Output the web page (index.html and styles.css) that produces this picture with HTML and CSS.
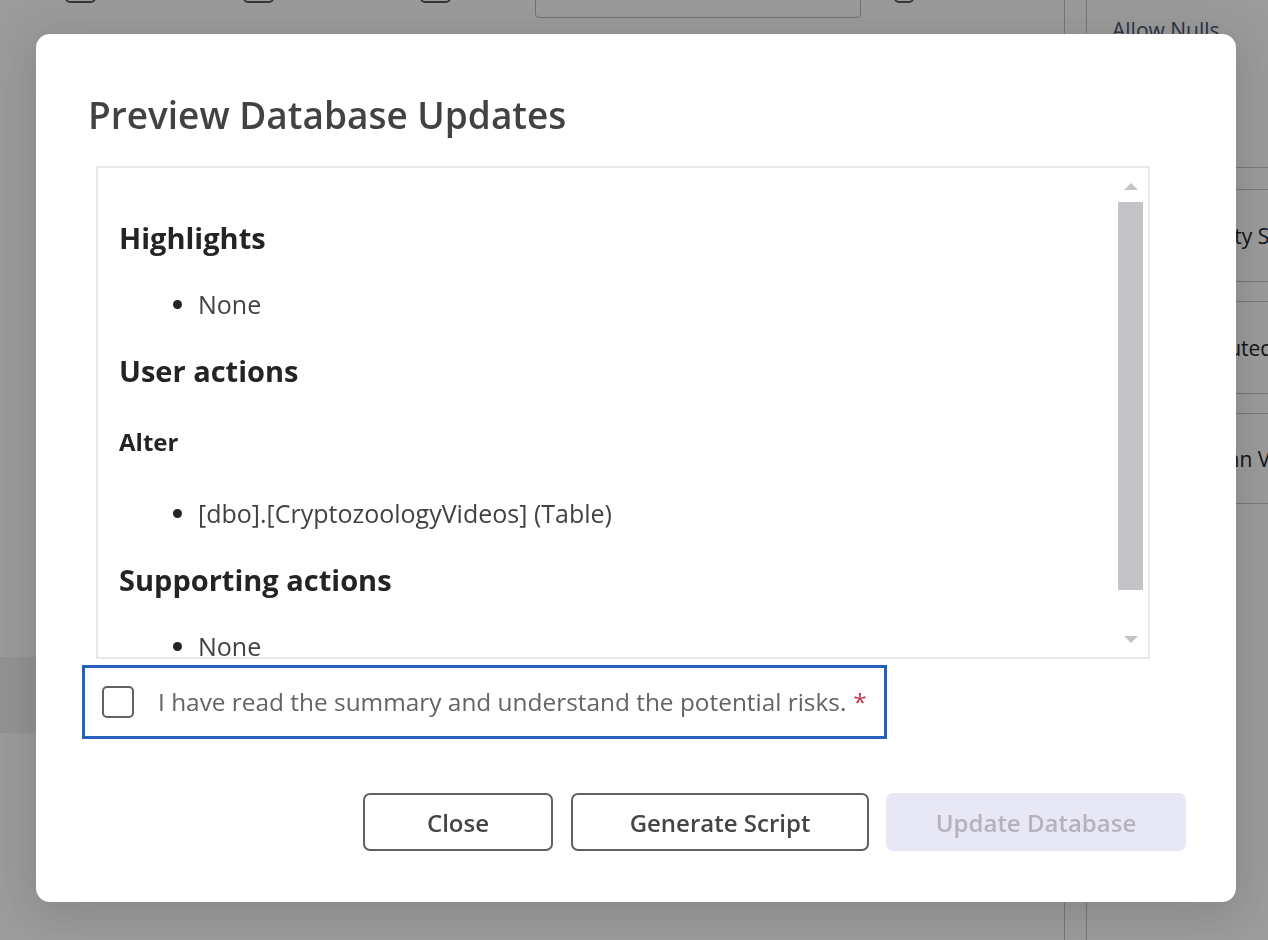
FILE: index.html
```html
<!DOCTYPE html>
<html lang="en">
<head>
<meta charset="utf-8">
<title>Preview Database Updates</title>
<link rel="stylesheet" href="styles.css">
</head>
<body>
<div class="app">
  <div class="toolbar">
    <span class="tb-check tb-c1"></span>
    <span class="tb-check tb-c2"></span>
    <span class="tb-check tb-c3"></span>
    <span class="tb-input"></span>
    <span class="tb-check tb-c4"></span>
  </div>
  <div class="workspace">
    <div class="main">
      <div class="main-row"></div>
    </div>
    <div class="side">
      <div class="side-col">
        <div class="side-head">Allow Nulls</div>
        <div class="prop">Identity Specification</div>
        <div class="prop prop-b">Computed</div>
        <div class="prop prop-c">Column Value</div>
      </div>
    </div>
  </div>
</div>

<div class="backdrop">
  <div class="dialog" role="dialog" aria-labelledby="dlg-title">
    <h1 class="dialog-title" id="dlg-title">Preview Database Updates</h1>
    <div class="summary">
      <div class="summary-content">
        <h2>Highlights</h2>
        <ul><li>None</li></ul>
        <h2>User actions</h2>
        <h3>Alter</h3>
        <ul><li>[dbo].[CryptozoologyVideos] (Table)</li></ul>
        <h2>Supporting actions</h2>
        <ul><li>None</li></ul>
      </div>
      <div class="scrollbar">
        <span class="sb-arrow sb-up"></span>
        <span class="sb-thumb"></span>
        <span class="sb-arrow sb-down"></span>
      </div>
    </div>
    <label class="ack">
      <span class="ack-box"></span>
      <span class="ack-text">I have read the summary and understand the potential risks.<span class="req">*</span></span>
    </label>
    <div class="actions">
      <button class="btn btn-close" type="button">Close</button>
      <button class="btn btn-script" type="button">Generate Script</button>
      <button class="btn btn-primary" type="button" disabled>Update Database</button>
    </div>
  </div>
</div>
</body>
</html>
```

FILE: styles.css
```css
* { box-sizing: border-box; }

html, body {
  margin: 0;
  height: 100%;
  overflow: hidden;
}

body {
  font-family: "Open Sans", "Noto Sans", Arial, sans-serif;
  background: #ffffff;
  color: #242424;
}

/* ---------- background application (dimmed by the backdrop) ---------- */
.app {
  height: 100%;
  display: flex;
  flex-direction: column;
}

.toolbar {
  height: 18px;
  flex: none;
  display: flex;
  align-items: flex-end;
  overflow: hidden;
}

.tb-check {
  flex: none;
  width: 31px;
  height: 30px;
  border: 2px solid #5a5a5a;
  border-radius: 5px;
  margin-bottom: 15px;
}
.tb-c1 { margin-left: 65px; }
.tb-c2 { margin-left: 147px; }
.tb-c3 { margin-left: 146px; }
.tb-c4 { width: 20px; margin-left: 33px; }

.tb-input {
  flex: none;
  width: 326px;
  height: 40px;
  margin-left: 84px;
  border: 1px solid #bdbdbd;
  border-radius: 4px;
}

.workspace {
  flex: 1;
  display: flex;
}

.main {
  flex: 1;
  padding-top: 639px;
}

.main-row {
  height: 76px;
  background: #f1f1f1;
}

.side {
  width: 204px;
  flex: none;
  border-left: 1px solid #c6c6c6;
  margin-top: -18px;
  padding-left: 21px;
}

.side-col {
  height: 100%;
  border-left: 1px solid #c6c6c6;
}

.side-head {
  height: 168px;
  border-bottom: 1px solid #c6c6c6;
  padding: 16px 0 0 25px;
  font-size: 21px;
  line-height: 28px;
  color: #4b5675;
  white-space: nowrap;
}

.prop {
  height: 93px;
  margin-top: 21px;
  border-top: 1px solid #c6c6c6;
  border-bottom: 1px solid #c6c6c6;
  display: flex;
  align-items: center;
  padding-left: 91px;
  font-size: 21px;
  color: #242424;
  white-space: nowrap;
  overflow: hidden;
}
.prop-b { margin-top: 19px; padding-left: 83px; }
.prop-c { margin-top: 19px; height: 91px; padding-left: 89px; }

/* ---------- modal ---------- */
.backdrop {
  position: fixed;
  inset: 0;
  background: rgba(0, 0, 0, 0.39);
  padding: 34px 32px 38px 36px;
  display: flex;
}

.dialog {
  flex: 1;
  background: #ffffff;
  border-radius: 14px;
  box-shadow: 0 0 50px 18px rgba(0, 0, 0, 0.07), 0 16px 48px rgba(0, 0, 0, 0.08);
  display: flex;
  flex-direction: column;
  padding: 0 50px 0 52px;
}

.dialog-title {
  margin: 61px 0 31px;
  font-size: 37px;
  line-height: 40px;
  font-weight: 600;
  color: #424242;
  letter-spacing: 0;
}

.summary {
  flex: none;
  width: 1054px;
  height: 493px;
  margin-left: 8px;
  border: 2px solid #e8e8e8;
  display: flex;
}

.summary-content {
  flex: 1;
  overflow: hidden;
  padding: 18px 0 0 21px;
}

.summary-content h2 {
  margin: 36px 0 35px;
  font-size: 29px;
  line-height: 32px;
  font-weight: 700;
  color: #242424;
}

.summary-content h3 {
  margin: 41px 0 42px;
  font-size: 24px;
  line-height: 28px;
  font-weight: 700;
  color: #242424;
}

.summary-content ul {
  margin: 0;
  padding-left: 79px;
}

.summary-content li {
  font-size: 25px;
  line-height: 30px;
  color: #424242;
}
.summary-content li::marker { color: #242424; }

.scrollbar {
  flex: none;
  width: 32px;
  display: flex;
  flex-direction: column;
  align-items: center;
  padding: 15px 5px 14px 2px;
}

.sb-arrow {
  width: 0;
  height: 0;
  border-left: 7px solid transparent;
  border-right: 7px solid transparent;
}
.sb-up { border-bottom: 7px solid #c3c2c7; }
.sb-down { border-top: 7px solid #c3c2c7; margin-top: auto; }

.sb-thumb {
  width: 25px;
  height: 388px;
  margin-top: 12px;
  background: #c4c3c8;
}

.ack {
  align-self: flex-start;
  margin: 6px 0 0 -6px;
  height: 74px;
  border: 3px solid #2560bd;
  padding: 0 17px 0 17px;
  display: flex;
  align-items: center;
  gap: 24px;
  cursor: pointer;
}

.ack-box {
  flex: none;
  width: 32px;
  height: 32px;
  border: 2px solid #616161;
  border-radius: 5px;
}

.ack-text {
  font-size: 24.4px;
  line-height: 30px;
  font-weight: 400;
  color: #646464;
  white-space: nowrap;
}

.req {
  color: #c4314b;
  margin-left: 7px;
}

.actions {
  margin-top: 54px;
  display: flex;
  justify-content: flex-end;
  gap: 17px;
}

.btn {
  height: 58px;
  border-radius: 7px;
  border: 2px solid #616161;
  background: #ffffff;
  font-family: inherit;
  font-size: 24px;
  font-weight: 600;
  color: #454545;
  padding: 0;
}
.btn-close { width: 190px; }
.btn-script { width: 298px; margin-left: 1px; }
.btn-primary {
  width: 300px;
  border: none;
  background: #e8e7f6;
  color: #b4b3bc;
}
```
